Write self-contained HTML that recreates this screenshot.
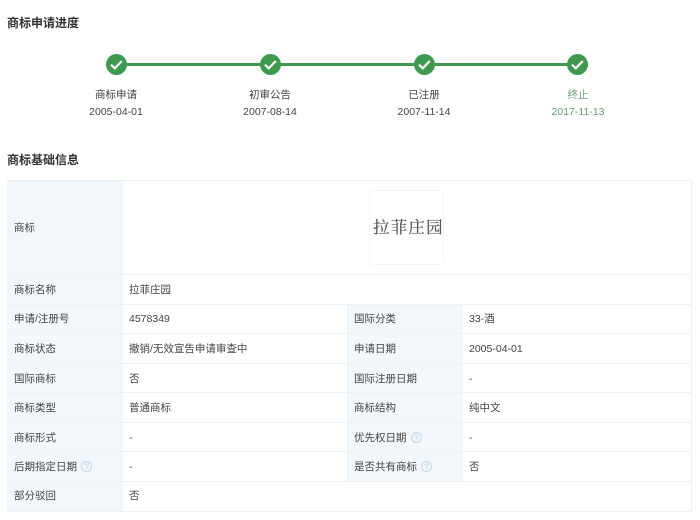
<!DOCTYPE html>
<html lang="zh">
<head>
<meta charset="utf-8">
<style>
html,body{margin:0;padding:0;background:#fff;}
body{width:700px;height:520px;position:relative;overflow:hidden;font-family:"Liberation Sans","Noto Sans CJK SC",sans-serif;font-size:10.5px;color:#444;}
#w{position:absolute;left:0;top:0;width:700px;height:520px;filter:blur(0.35px);}
.a{position:absolute;white-space:nowrap;}
.h{font-size:12px;font-weight:bold;color:#333;line-height:16px;left:7px;}
.s{width:120px;text-align:center;line-height:16px;}
.c{position:absolute;top:54px;width:21px;height:21px;}
.line{position:absolute;left:116px;top:63px;width:462px;height:3px;background:#3f9a4f;}
.lb{position:absolute;background:#f2f7fb;}
.hl{position:absolute;height:1px;background:#edf2f6;}
.vl{position:absolute;width:1px;background:#edf2f6;}
.t{position:absolute;white-space:nowrap;line-height:16px;color:#444;}
.q{position:absolute;width:11px;height:11px;}
</style>
</head>
<body>
<div id="w">
<div class="a h" style="top:15px">商标申请进度</div>
<div class="line"></div>
<svg class="c" style="left:106px" viewBox="0 0 21 21"><circle cx="10.5" cy="10.5" r="10.5" fill="#3f9a4f"/><path d="M5 10.7l3.8 3.6 7-7.300" fill="none" stroke="#fff" stroke-width="2.200"/></svg>
<svg class="c" style="left:260px" viewBox="0 0 21 21"><circle cx="10.5" cy="10.5" r="10.5" fill="#3f9a4f"/><path d="M5 10.7l3.8 3.6 7-7.300" fill="none" stroke="#fff" stroke-width="2.200"/></svg>
<svg class="c" style="left:413.500px" viewBox="0 0 21 21"><circle cx="10.5" cy="10.5" r="10.5" fill="#3f9a4f"/><path d="M5 10.7l3.8 3.6 7-7.300" fill="none" stroke="#fff" stroke-width="2.200"/></svg>
<svg class="c" style="left:567px" viewBox="0 0 21 21"><circle cx="10.5" cy="10.5" r="10.5" fill="#3f9a4f"/><path d="M5 10.7l3.8 3.6 7-7.300" fill="none" stroke="#fff" stroke-width="2.200"/></svg>
<div class="a s" style="left:56px;top:87px">商标申请</div>
<div class="a s" style="left:56px;top:104px">2005-04-01</div>
<div class="a s" style="left:210px;top:87px">初审公告</div>
<div class="a s" style="left:210px;top:104px">2007-08-14</div>
<div class="a s" style="left:364px;top:87px">已注册</div>
<div class="a s" style="left:364px;top:104px">2007-11-14</div>
<div class="a s" style="left:518px;top:87px;color:#6aa37a">终止</div>
<div class="a s" style="left:518px;top:104px;color:#5f9f6e">2017-11-13</div>
<div class="a h" style="top:152px">商标基础信息</div>

<div class="lb" style="left:7px;top:180px;width:116px;height:331px"></div>
<div class="lb" style="left:347px;top:304px;width:116px;height:178px"></div>
<div class="hl" style="left:7px;top:180px;width:684px"></div>
<div class="hl" style="left:7px;top:274px;width:684px"></div>
<div class="hl" style="left:7px;top:304px;width:684px"></div>
<div class="hl" style="left:7px;top:333px;width:684px"></div>
<div class="hl" style="left:7px;top:363px;width:684px"></div>
<div class="hl" style="left:7px;top:392px;width:684px"></div>
<div class="hl" style="left:7px;top:422px;width:684px"></div>
<div class="hl" style="left:7px;top:451px;width:684px"></div>
<div class="hl" style="left:7px;top:481px;width:684px"></div>
<div class="hl" style="left:7px;top:511px;width:684px"></div>
<div class="vl" style="left:691px;top:180px;height:332px"></div>
<div class="vl" style="left:347px;top:304px;height:177px"></div>

<div class="a" style="left:369px;top:190px;width:75px;height:75px;border:1px solid #f5f5f5;border-radius:5px;box-sizing:border-box"></div>
<div class="a" style="left:373px;top:217px;font-family:'Liberation Serif','Noto Serif CJK SC',serif;font-size:16.500px;letter-spacing:1.200px;line-height:22px;color:#555;text-shadow:0 0 0.6px #666">拉菲庄园</div>

<div class="t" style="left:14px;top:220px">商标</div>
<div class="t" style="left:14px;top:282px">商标名称</div>
<div class="t" style="left:129px;top:282px">拉菲庄园</div>
<div class="t" style="left:14px;top:311px">申请/注册号</div>
<div class="t" style="left:129px;top:311px">4578349</div>
<div class="t" style="left:354px;top:311px">国际分类</div>
<div class="t" style="left:469px;top:311px">33-酒</div>
<div class="t" style="left:14px;top:341px">商标状态</div>
<div class="t" style="left:129px;top:341px">撤销/无效宣告申请审查中</div>
<div class="t" style="left:354px;top:341px">申请日期</div>
<div class="t" style="left:469px;top:341px">2005-04-01</div>
<div class="t" style="left:14px;top:371px">国际商标</div>
<div class="t" style="left:129px;top:371px">否</div>
<div class="t" style="left:354px;top:371px">国际注册日期</div>
<div class="t" style="left:469px;top:371px">-</div>
<div class="t" style="left:14px;top:400px">商标类型</div>
<div class="t" style="left:129px;top:400px">普通商标</div>
<div class="t" style="left:354px;top:400px">商标结构</div>
<div class="t" style="left:469px;top:400px">纯中文</div>
<div class="t" style="left:14px;top:430px">商标形式</div>
<div class="t" style="left:129px;top:430px">-</div>
<div class="t" style="left:354px;top:430px">优先权日期</div>
<svg class="q" style="left:411px;top:432px" viewBox="0 0 11 11"><circle cx="5.500" cy="5.500" r="5" fill="none" stroke="#c3d8ea"/><text x="5.500" y="8.500" font-size="8" text-anchor="middle" fill="#b5cde2" font-family="Liberation Sans">?</text></svg>
<div class="t" style="left:469px;top:430px">-</div>
<div class="t" style="left:14px;top:459px">后期指定日期</div>
<svg class="q" style="left:81px;top:461px" viewBox="0 0 11 11"><circle cx="5.500" cy="5.500" r="5" fill="none" stroke="#c3d8ea"/><text x="5.500" y="8.500" font-size="8" text-anchor="middle" fill="#b5cde2" font-family="Liberation Sans">?</text></svg>
<div class="t" style="left:129px;top:459px">-</div>
<div class="t" style="left:354px;top:459px">是否共有商标</div>
<svg class="q" style="left:421px;top:461px" viewBox="0 0 11 11"><circle cx="5.500" cy="5.500" r="5" fill="none" stroke="#c3d8ea"/><text x="5.500" y="8.500" font-size="8" text-anchor="middle" fill="#b5cde2" font-family="Liberation Sans">?</text></svg>
<div class="t" style="left:469px;top:459px">否</div>
<div class="t" style="left:14px;top:488px">部分驳回</div>
<div class="t" style="left:129px;top:488px">否</div>
</div>
</body>
</html>
